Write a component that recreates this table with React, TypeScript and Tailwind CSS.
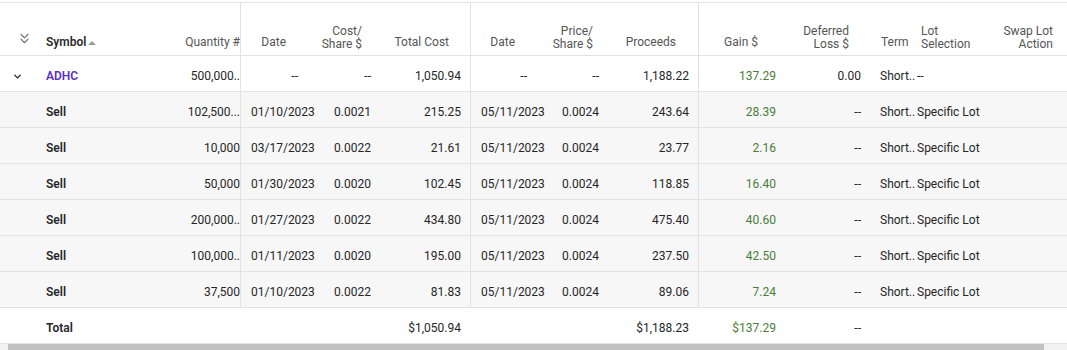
import React from "react";
import { ChevronDown, ChevronsDown } from "lucide-react";

type Align = "left" | "right";

type Lot = {
  qty: string;
  acquired: string;
  costShare: string;
  totalCost: string;
  sold: string;
  priceShare: string;
  proceeds: string;
  gain: string;
};

const lots: Lot[] = [
  { qty: "102,500...", acquired: "01/10/2023", costShare: "0.0021", totalCost: "215.25", sold: "05/11/2023", priceShare: "0.0024", proceeds: "243.64", gain: "28.39" },
  { qty: "10,000", acquired: "03/17/2023", costShare: "0.0022", totalCost: "21.61", sold: "05/11/2023", priceShare: "0.0024", proceeds: "23.77", gain: "2.16" },
  { qty: "50,000", acquired: "01/30/2023", costShare: "0.0020", totalCost: "102.45", sold: "05/11/2023", priceShare: "0.0024", proceeds: "118.85", gain: "16.40" },
  { qty: "200,000..", acquired: "01/27/2023", costShare: "0.0022", totalCost: "434.80", sold: "05/11/2023", priceShare: "0.0024", proceeds: "475.40", gain: "40.60" },
  { qty: "100,000..", acquired: "01/11/2023", costShare: "0.0020", totalCost: "195.00", sold: "05/11/2023", priceShare: "0.0024", proceeds: "237.50", gain: "42.50" },
  { qty: "37,500", acquired: "01/10/2023", costShare: "0.0022", totalCost: "81.83", sold: "05/11/2023", priceShare: "0.0024", proceeds: "89.06", gain: "7.24" },
];

const gridCols =
  "grid grid-cols-[36px_114px_90px_68px_73px_89px_67px_72px_89px_87px_85px_46px_84px_1fr]";

const Cell = ({
  children,
  align = "right",
  className = "",
}: {
  children?: React.ReactNode;
  align?: Align;
  className?: string;
}) => (
  <div
    className={`flex items-center pt-[5px] whitespace-nowrap overflow-visible ${
      align === "right" ? "justify-end" : "justify-start"
    } ${className}`}
  >
    {children}
  </div>
);

const HeadCell = ({
  children,
  align = "right",
  twoLine = false,
  className = "",
}: {
  children?: React.ReactNode;
  align?: Align;
  twoLine?: boolean;
  className?: string;
}) => (
  <div
    className={`flex flex-col justify-end leading-[13px] ${twoLine ? "pb-[4px]" : "pb-[6px]"} ${
      align === "right" ? "items-end text-right" : "items-start text-left"
    } ${className}`}
  >
    {children}
  </div>
);

const LotRow = ({ lot }: { lot: Lot }) => (
  <div className={`${gridCols} h-9 border-b border-[#e2e2e2] bg-[#f7f7f7]`}>
    <Cell />
    <Cell align="left" className="pl-[10px] font-semibold">Sell</Cell>
    <Cell className="pr-0">{lot.qty}</Cell>
    <Cell align="left" className="pl-[10px] border-l border-[#e2e2e2]">{lot.acquired}</Cell>
    <Cell className="pr-[10px]">{lot.costShare}</Cell>
    <Cell className="pr-[9px]">{lot.totalCost}</Cell>
    <Cell align="left" className="pl-[10px] border-l border-[#e2e2e2]">{lot.sold}</Cell>
    <Cell className="pr-[10px]">{lot.priceShare}</Cell>
    <Cell className="pr-[9px]">{lot.proceeds}</Cell>
    <Cell className="pr-[9px] border-l border-[#e2e2e2] text-[#4a7d3a]">{lot.gain}</Cell>
    <Cell className="pr-[9px]">--</Cell>
    <Cell align="left" className="pl-[10px]">Short..</Cell>
    <Cell align="left" className="pl-[1px]">Specific Lot</Cell>
    <Cell />
  </div>
);

export default function App() {
  return (
    <div
      className="w-[1067px] h-[350px] overflow-hidden bg-white pt-[2px] text-[12px] text-[#262626]"
      style={{ fontFamily: "Roboto, 'Liberation Sans', sans-serif" }}
    >
      <div className="border-t border-[#e4e4e4]">
        {/* header */}
        <div className={`${gridCols} h-[53px] border-b border-[#e2e2e2] text-[#555]`}>
          <div className="flex items-end justify-center pb-[8px] pl-[12px]">
            <ChevronsDown size={17} strokeWidth={1.6} className="text-[#6f6f6f]" />
          </div>
          <HeadCell align="left" className="pl-[10px]">
            <div className="flex items-center gap-[2px] font-semibold text-[#2a2a2a]">
              Symbol
              <svg width="8" height="5" viewBox="0 0 8 5">
                <path d="M0 5 L4 1 L8 5 Z" fill="#9a9a9a" />
              </svg>
            </div>
          </HeadCell>
          <HeadCell className="pr-0">Quantity #</HeadCell>
          <HeadCell className="pr-[22px] border-l border-[#e2e2e2]">Date</HeadCell>
          <HeadCell twoLine className="pr-[19px]">
            <span>Cost/</span>
            <span>Share $</span>
          </HeadCell>
          <HeadCell className="pr-[21px]">Total Cost</HeadCell>
          <HeadCell className="pr-[22px] border-l border-[#e2e2e2]">Date</HeadCell>
          <HeadCell twoLine className="pr-[16px]">
            <span>Price/</span>
            <span>Share $</span>
          </HeadCell>
          <HeadCell className="pr-[22px]">Proceeds</HeadCell>
          <HeadCell className="pr-[27px] border-l border-[#e2e2e2]">Gain $</HeadCell>
          <HeadCell twoLine className="pr-[21px]">
            <span>Deferred</span>
            <span>Loss $</span>
          </HeadCell>
          <HeadCell align="left" className="pl-[11px]">Term</HeadCell>
          <HeadCell twoLine align="left" className="pl-[5px]">
            <span>Lot</span>
            <span>Selection</span>
          </HeadCell>
          <HeadCell twoLine className="pr-[14px]">
            <span>Swap Lot</span>
            <span>Action</span>
          </HeadCell>
        </div>

        {/* symbol row */}
        <div className={`${gridCols} h-9 border-b border-[#e2e2e2] bg-white`}>
          <Cell align="left" className="pl-[12px]">
            <ChevronDown size={11} strokeWidth={3} className="text-[#222]" />
          </Cell>
          <Cell align="left" className="pl-[10px] font-semibold text-[#5b2fc9]">ADHC</Cell>
          <Cell className="pr-0">500,000..</Cell>
          <Cell className="pr-[10px] border-l border-[#e2e2e2]">--</Cell>
          <Cell className="pr-[10px]">--</Cell>
          <Cell className="pr-[9px]">1,050.94</Cell>
          <Cell className="pr-[10px] border-l border-[#e2e2e2]">--</Cell>
          <Cell className="pr-[10px]">--</Cell>
          <Cell className="pr-[9px]">1,188.22</Cell>
          <Cell className="pr-[9px] border-l border-[#e2e2e2] text-[#4a7d3a]">137.29</Cell>
          <Cell className="pr-[9px]">0.00</Cell>
          <Cell align="left" className="pl-[10px]">Short..</Cell>
          <Cell align="left" className="pl-[1px]">--</Cell>
          <Cell />
        </div>

        {lots.map((lot, i) => (
          <LotRow key={i} lot={lot} />
        ))}

        {/* total row */}
        <div className={`${gridCols} h-9 border-b border-[#e2e2e2] bg-white`}>
          <Cell />
          <Cell align="left" className="pl-[10px] font-semibold">Total</Cell>
          <Cell />
          <Cell />
          <Cell />
          <Cell className="pr-[9px]">$1,050.94</Cell>
          <Cell />
          <Cell />
          <Cell className="pr-[9px]">$1,188.23</Cell>
          <Cell className="pr-[9px] text-[#4a7d3a]">$137.29</Cell>
          <Cell className="pr-[9px]">--</Cell>
          <Cell />
          <Cell />
          <Cell />
        </div>

        {/* horizontal scrollbar */}
        <div className="flex h-[8px] bg-[#f1f1f1]">
          <div className="w-[8px]" />
          <div className="w-[1036px] bg-[#c1c1c1]" />
        </div>
      </div>
    </div>
  );
}
